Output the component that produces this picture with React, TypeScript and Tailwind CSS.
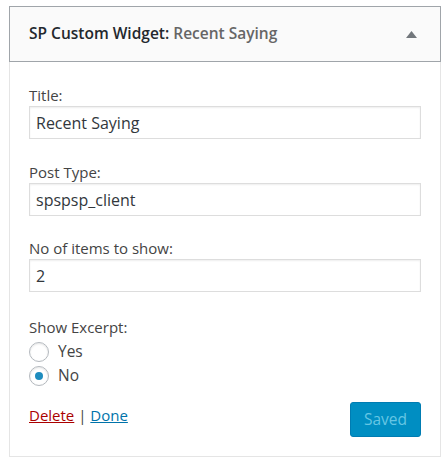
import React from "react";

const font = { fontFamily: '"Open Sans", "Noto Sans", "Liberation Sans", sans-serif' };

function Field({ label, value, top }: { label: string; value: string; top: string }) {
  return (
    <div className={top}>
      <label className="block text-[15px] leading-[21px] text-[#444]">{label}</label>
      <div className="h-[33px] border border-[#ddd] bg-white shadow-[inset_0_1px_2px_rgba(0,0,0,0.07)] flex items-center px-[6px] text-[16px] text-[#32373c]">
        {value}
      </div>
    </div>
  );
}

function Radio({ label, checked }: { label: string; checked?: boolean }) {
  return (
    <div className="flex items-center h-[24px]">
      <span className="w-[20px] h-[20px] rounded-full border border-[#b4b9be] bg-white shadow-[inset_0_1px_2px_rgba(0,0,0,0.1)] flex items-center justify-center">
        {checked && <span className="w-[8px] h-[8px] rounded-full bg-[#1e8cbe]" />}
      </span>
      <span className="ml-[9px] text-[15.5px] text-[#444]">{label}</span>
    </div>
  );
}

export default function App() {
  return (
    <div className="w-[446px] h-[468px] bg-white pt-[6px] pl-[9px]" style={font}>
      <div className="w-[432px]">
        <div className="h-[56px] border border-[#a0a5aa] bg-[#fafafa] flex items-center justify-between pl-[19px] pr-[23px]">
          <h3 className="text-[15.5px] font-semibold text-[#23282d]">
            SP Custom Widget:{" "}
            <span className="text-[#666]">Recent Saying</span>
          </h3>
          <svg width="11" height="7" viewBox="0 0 11 7">
            <path d="M5.5 0 L11 7 L0 7 Z" fill="#72777c" />
          </svg>
        </div>
        <div className="border-x border-b border-[#e5e5e5] bg-white px-[19px] pt-[23px] pb-[19px]">
          <Field label="Title:" value="Recent Saying" top="" />
          <Field label="Post Type:" value="spspsp_client" top="mt-[23px]" />
          <Field label="No of items to show:" value="2" top="mt-[22px]" />
          <div className="mt-[25px]">
            <div className="text-[15px] leading-[21px] text-[#444]">Show Excerpt:</div>
            <div className="mt-[2px]">
              <Radio label="Yes" />
              <Radio label="No" checked />
            </div>
          </div>
          <div className="flex items-start justify-between mt-[14px]">
            <div className="text-[15px] leading-[21px] text-[#444] mt-[3px]">
              <a className="text-[#a00] underline">Delete</a> | <a className="text-[#0073aa] underline">Done</a>
            </div>
            <button className="w-[71px] h-[35px] rounded-[3px] bg-[#008ec2] border border-[#007cb2] text-[#66c6e4] text-[15.5px]">
              Saved
            </button>
          </div>
        </div>
      </div>
    </div>
  );
}
